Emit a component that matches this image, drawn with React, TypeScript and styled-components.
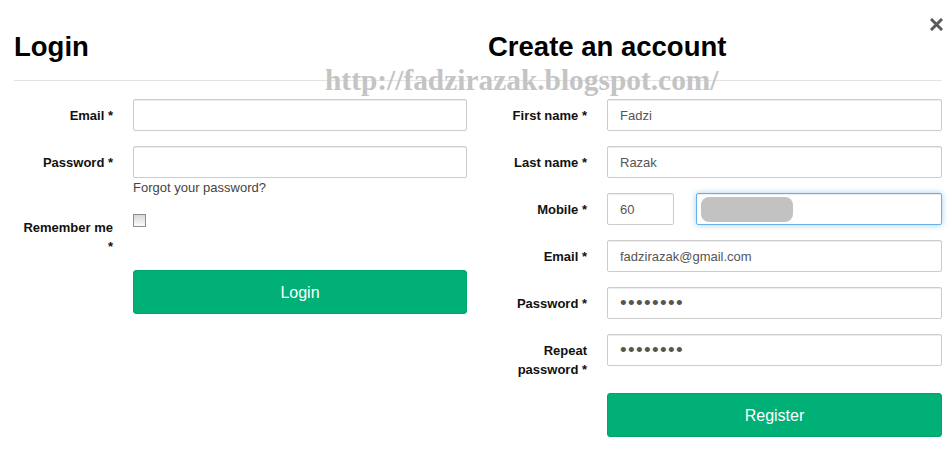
import React from 'react';
import styled, { createGlobalStyle } from 'styled-components';

const GlobalStyle = createGlobalStyle`
  html, body {
    margin: 0;
    padding: 0;
    background: #ffffff;
  }
  body {
    font-family: "Liberation Sans", Arial, sans-serif;
    color: #111;
  }
`;

const Page = styled.div`
  position: relative;
  width: 950px;
  height: 460px;
  box-sizing: border-box;
  padding: 30px 8px 0 14px;
  display: grid;
  grid-template-columns: 453px 454px;
  column-gap: 21px;
  align-items: start;
`;

const Column = styled.section`
  display: flex;
  flex-direction: column;
`;

const Heading = styled.h2`
  margin: 0 0 18px;
  padding-bottom: 17px;
  border-bottom: 1px solid #e3e3e3;
  font-size: 27.5px;
  line-height: 33px;
  font-weight: bold;
  color: #000;
`;

const Row = styled.div<{ $action?: boolean }>`
  display: grid;
  grid-template-columns: 99px 1fr;
  column-gap: 20px;
  margin-top: ${({ $action }) => ($action ? '-1px' : '0')};
  margin-bottom: 15px;
`;

const Label = styled.label`
  box-sizing: border-box;
  padding: 7px 0 0 4px;
  text-align: right;
  font-size: 13px;
  line-height: 19px;
  font-weight: bold;
  color: #111;
`;

const Field = styled.div`
  display: flex;
  flex-direction: column;
`;

const InlineField = styled.div`
  display: flex;
  gap: 22px;
`;

const Input = styled.input<{ $secret?: boolean }>`
  box-sizing: border-box;
  width: 100%;
  height: 32px;
  padding: 6px 12px;
  border: 1px solid #ccc;
  border-radius: 2px;
  box-shadow: inset 0 1px 1px rgba(0, 0, 0, 0.075);
  font-family: "Liberation Sans", Arial, sans-serif;
  font-size: ${({ $secret }) => ($secret ? '19px' : '13px')};
  letter-spacing: ${({ $secret }) => ($secret ? '1.35px' : 'normal')};
  color: #555;
  outline: none;
`;

const CodeInput = styled(Input)`
  width: 67px;
  flex: none;
`;

const PhoneBox = styled.div`
  box-sizing: border-box;
  flex: 1;
  height: 32px;
  display: flex;
  align-items: center;
  padding: 0 4px;
  border: 1px solid #66afe9;
  border-radius: 2px;
  box-shadow: inset 0 1px 1px rgba(0, 0, 0, 0.075), 0 0 6px rgba(102, 175, 233, 0.6);
`;

const Redacted = styled.span`
  width: 92px;
  height: 25px;
  border-radius: 8px;
  background: #c2c2c2;
`;

const HelpText = styled.span`
  margin-top: 1px;
  font-size: 13px;
  line-height: 17px;
  color: #444;
`;

const Checkbox = styled.input`
  appearance: none;
  box-sizing: border-box;
  width: 13px;
  height: 13px;
  margin: 3px 0 0;
  border: 1px solid #8e8e8e;
  background: linear-gradient(#d8d8d8, #fbfbfb);
`;

const Button = styled.button`
  box-sizing: border-box;
  width: 100%;
  height: 44px;
  padding-top: 2px;
  border: 1px solid #00a46f;
  border-radius: 3px;
  background: #00b077;
  color: #fff;
  font-family: "Liberation Sans", Arial, sans-serif;
  font-size: 16px;
  cursor: pointer;
`;

const Watermark = styled.div`
  position: absolute;
  left: 325px;
  top: 66px;
  font-family: "Liberation Serif", "Times New Roman", serif;
  font-weight: bold;
  font-size: 29.4px;
  line-height: 1;
  color: #c4c4c4;
  white-space: nowrap;
  pointer-events: none;
`;

const CloseButton = styled.button`
  position: absolute;
  top: 18px;
  right: 7px;
  width: 13px;
  height: 13px;
  padding: 0;
  border: none;
  background: none;
  cursor: pointer;
  display: flex;
`;

const Spacer = styled.span``;

export default function App() {
  return (
    <>
      <GlobalStyle />
      <Page>
        <Column>
          <Heading>Login</Heading>
          <Row>
            <Label htmlFor="login-email">Email *</Label>
            <Input id="login-email" type="text" />
          </Row>
          <Row>
            <Label htmlFor="login-password">Password *</Label>
            <Field>
              <Input id="login-password" type="password" />
              <HelpText>Forgot your password?</HelpText>
            </Field>
          </Row>
          <Row>
            <Label htmlFor="remember">Remember me *</Label>
            <Field>
              <Checkbox id="remember" type="checkbox" />
            </Field>
          </Row>
          <Row $action>
            <Spacer />
            <Button>Login</Button>
          </Row>
        </Column>

        <Column>
          <Heading>Create an account</Heading>
          <Row>
            <Label htmlFor="first-name">First name *</Label>
            <Input id="first-name" type="text" defaultValue="Fadzi" />
          </Row>
          <Row>
            <Label htmlFor="last-name">Last name *</Label>
            <Input id="last-name" type="text" defaultValue="Razak" />
          </Row>
          <Row>
            <Label htmlFor="mobile-code">Mobile *</Label>
            <InlineField>
              <CodeInput id="mobile-code" type="text" defaultValue="60" />
              <PhoneBox>
                <Redacted />
              </PhoneBox>
            </InlineField>
          </Row>
          <Row>
            <Label htmlFor="reg-email">Email *</Label>
            <Input id="reg-email" type="text" defaultValue="fadzirazak@gmail.com" />
          </Row>
          <Row>
            <Label htmlFor="reg-password">Password *</Label>
            <Input id="reg-password" type="password" $secret defaultValue="fadzi123" />
          </Row>
          <Row>
            <Label htmlFor="reg-repeat">Repeat password *</Label>
            <Input id="reg-repeat" type="password" $secret defaultValue="fadzi123" />
          </Row>
          <Row $action>
            <Spacer />
            <Button>Register</Button>
          </Row>
        </Column>

        <Watermark>http://fadzirazak.blogspot.com/</Watermark>
        <CloseButton aria-label="Close">
          <svg width="13" height="13" viewBox="0 0 13 13">
            <path d="M2 2 L11 11 M11 2 L2 11" stroke="#5b5b5b" strokeWidth="3" strokeLinecap="square" />
          </svg>
        </CloseButton>
      </Page>
    </>
  );
}
